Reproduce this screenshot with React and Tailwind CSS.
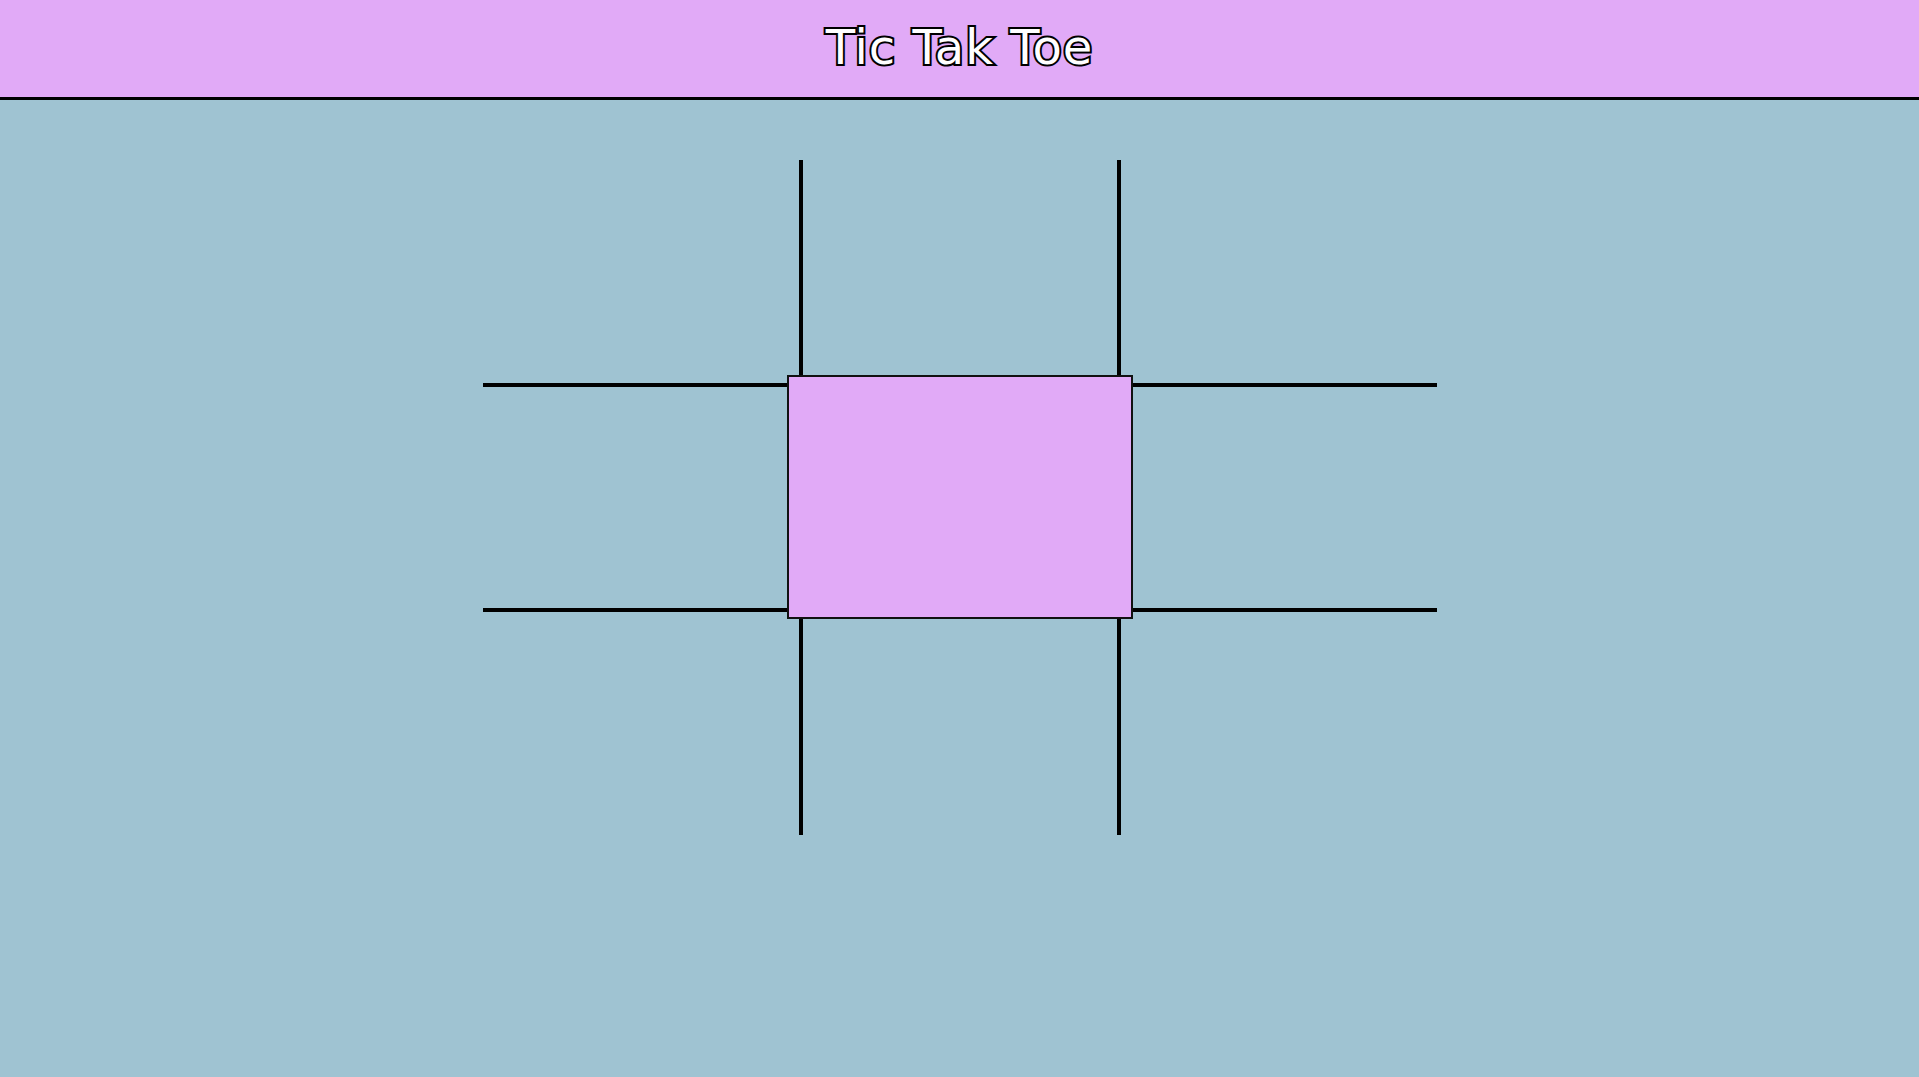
const cells = [0, 1, 2, 3, 4, 5, 6, 7, 8];

// border classes per cell, written out in full so Tailwind picks them up
const cellBorders = [
  "",
  "border-x-4",
  "",
  "border-y-4",
  "border-4",
  "border-y-4",
  "",
  "border-x-4",
  "",
];

const App = () => {
  return (
    <div className="min-h-screen bg-[#9fc3d2] font-['DejaVu_Sans',sans-serif]">
      {/* Header */}
      <header className="h-[100px] bg-[#e1aaf7] border-b-[3px] border-black flex items-center justify-center pb-1">
        <h1 className="text-[48px] leading-[48px] tracking-[1px] text-white [-webkit-text-stroke:4px_black] [paint-order:stroke_fill]">
          Tic Tak Toe
        </h1>
      </header>

      {/* Board */}
      <div className="mt-[60px] mx-auto w-[954px] grid grid-cols-[316px_322px_316px] grid-rows-[223px_229px_223px]">
        {cells.map((i) => (
          <div
            key={i}
            className={`relative border-black ${cellBorders[i]}`}
          >
            {i === 4 && (
              <div className="absolute z-10 left-[-16px] top-[-12px] w-[346px] h-[244px] bg-[#e1aaf7] border-2 border-[#111]" />
            )}
          </div>
        ))}
      </div>
    </div>
  );
};

export default App;
